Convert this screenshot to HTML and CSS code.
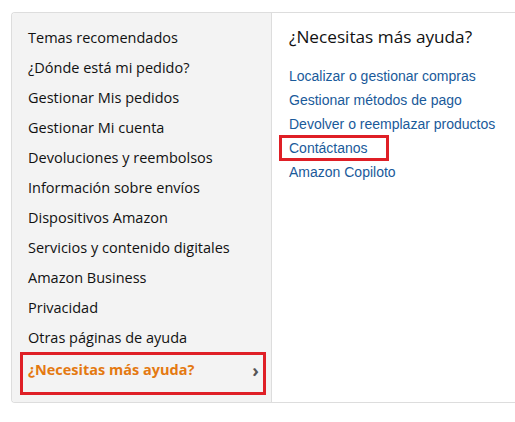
FILE: index.html
```html
<!DOCTYPE html>
<html lang="es">
<head>
    <meta charset="UTF-8">
    <title>Ayuda</title>
    <link rel="stylesheet" href="styles.css">
</head>
<body>
    <div class="help-box">
        <ul class="topic-list">
            <li class="topic">Temas recomendados</li>
            <li class="topic">¿Dónde está mi pedido?</li>
            <li class="topic">Gestionar Mis pedidos</li>
            <li class="topic">Gestionar Mi cuenta</li>
            <li class="topic">Devoluciones y reembolsos</li>
            <li class="topic">Información sobre envíos</li>
            <li class="topic">Dispositivos Amazon</li>
            <li class="topic">Servicios y contenido digitales</li>
            <li class="topic">Amazon Business</li>
            <li class="topic">Privacidad</li>
            <li class="topic">Otras páginas de ayuda</li>
            <li class="topic topic-active">
                <span>¿Necesitas más ayuda?</span>
                <span class="chevron">›</span>
            </li>
        </ul>
        <div class="help-content">
            <h2>¿Necesitas más ayuda?</h2>
            <div class="link-list">
                <a href="#" class="help-link">Localizar o gestionar compras</a>
                <a href="#" class="help-link">Gestionar métodos de pago</a>
                <a href="#" class="help-link">Devolver o reemplazar productos</a>
                <a href="#" class="help-link marked">Contáctanos</a>
                <a href="#" class="help-link">Amazon Copiloto</a>
            </div>
        </div>
    </div>
</body>
</html>
```

FILE: styles.css
```css
* {
    margin: 0;
    padding: 0;
    box-sizing: border-box;
}

body {
    font-family: "Open Sans", "Noto Sans", sans-serif;
    background: #fff;
    color: #111;
    padding: 12px 0 0 11px;
}

.help-box {
    display: flex;
    width: 520px;
    height: 391px;
    border: 1px solid #dddddd;
    border-right: none;
    border-radius: 4px 0 0 4px;
    overflow: hidden;
}

.topic-list {
    list-style: none;
    width: 260px;
    background: #f3f3f3;
    border-right: 1px solid #dddddd;
    padding: 10px 5px 0 8px;
}

.topic {
    height: 30px;
    line-height: 30px;
    font-size: 14.5px;
    padding-left: 8px;
    color: #111;
}

.topic-active {
    display: flex;
    justify-content: space-between;
    align-items: center;
    height: 43px;
    margin-top: -1px;
    border: 3px solid #df1f26;
    padding: 0 4px 8px 5px;
    color: #e47911;
    font-weight: 700;
}

.chevron {
    color: #555;
    font-size: 18px;
    font-weight: 700;
}

.help-content {
    padding: 10px 0 0 17px;
}

h2 {
    font-size: 17.2px;
    font-weight: 400;
    color: #111;
    line-height: 28px;
    margin-bottom: 13px;
}

.link-list {
    display: flex;
    flex-direction: column;
    align-items: flex-start;
}

.help-link {
    font-family: "Liberation Sans", Arial, sans-serif;
    font-size: 14px;
    line-height: 24px;
    color: #1a5a9a;
    text-decoration: none;
}

.marked {
    border: 3px solid #df1f26;
    margin: -1px 0 -1px -10px;
    padding: 0 18px 0 7px;
    line-height: 20px;
}
```
